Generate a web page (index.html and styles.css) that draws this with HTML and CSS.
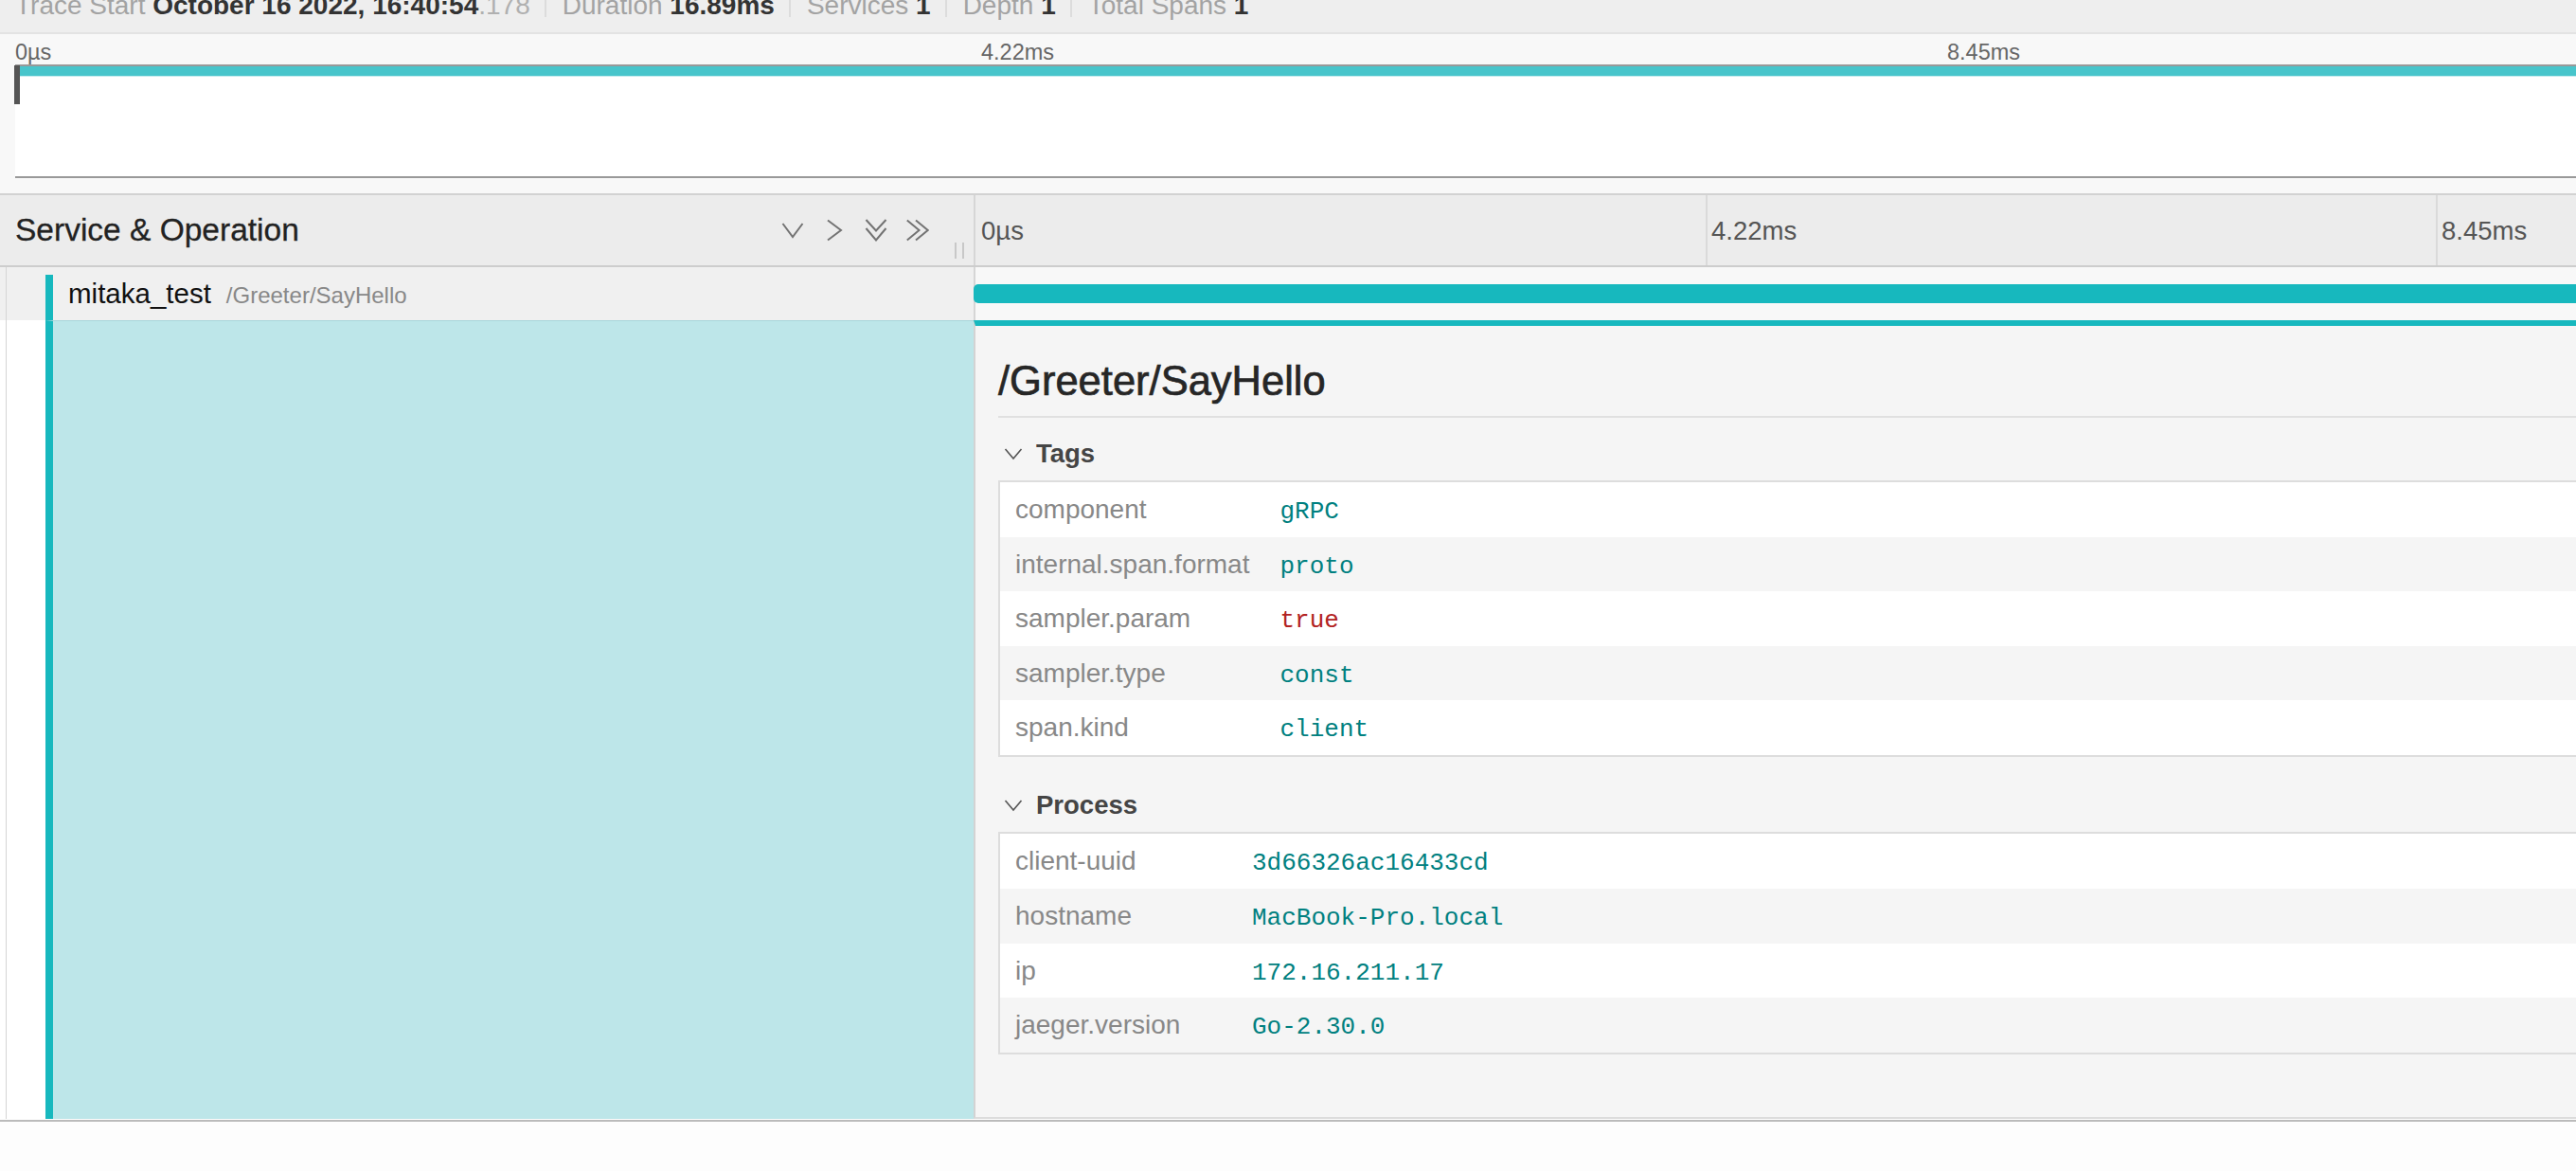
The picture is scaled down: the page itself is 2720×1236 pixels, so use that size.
FILE: index.html
```html
<!DOCTYPE html>
<html lang="en">
<head>
<meta charset="utf-8">
<title>Trace</title>
<link rel="stylesheet" href="styles.css">
</head>
<body>
<div class="page">
  <div class="overview">
    <div class="ov-item"><span class="ov-label">Trace Start</span> <strong class="ov-val">October 16 2022, 16:40:54</strong><span class="ov-dim">.178</span></div>
    <i class="ov-sep"></i>
    <div class="ov-item"><span class="ov-label">Duration</span> <strong class="ov-val">16.89ms</strong></div>
    <i class="ov-sep"></i>
    <div class="ov-item"><span class="ov-label">Services</span> <strong class="ov-val">1</strong></div>
    <i class="ov-sep"></i>
    <div class="ov-item"><span class="ov-label">Depth</span> <strong class="ov-val">1</strong></div>
    <i class="ov-sep"></i>
    <div class="ov-item"><span class="ov-label">Total Spans</span> <strong class="ov-val">1</strong></div>
  </div>

  <section class="minimap">
    <div class="mm-labels"><span>0µs</span><span>4.22ms</span><span>8.45ms</span><span>12.67ms</span></div>
    <div class="mm-box">
      <div class="mm-bar"></div>
      <div class="mm-tick edge"></div>
      <div class="mm-tick"></div>
      <div class="mm-tick"></div>
      <div class="mm-tick"></div>
      <div class="mm-handle"></div>
    </div>
  </section>

  <div class="trace">
    <div class="tl-header">
      <div class="name-col hdr-name">
        <h3 class="hdr-title">Service &amp; Operation</h3>
        <div class="hdr-icons">
          <svg class="ico" viewBox="0 0 24 24"><polyline points="1.5,5 12,19 22.5,5"/></svg>
          <svg class="ico" viewBox="0 0 24 24"><polyline points="5,1.5 19,12 5,22.5"/></svg>
          <svg class="ico" viewBox="0 0 24 24"><polyline points="1.5,1 12,12.5 22.5,1"/><polyline points="1.5,10 12,22.5 22.5,10"/></svg>
          <svg class="ico" viewBox="0 0 24 24"><polyline points="0.8,1.5 13.5,12 0.8,22.5"/><polyline points="10,1.5 22.7,12 10,22.5"/></svg>
        </div>
        <div class="resizer"><i></i><i></i></div>
      </div>
      <div class="ticks hdr-ticks">
        <div class="tick first"><span>0µs</span></div>
        <div class="tick"><span>4.22ms</span></div>
        <div class="tick"><span>8.45ms</span></div>
        <div class="tick"><span>12.67ms</span></div>
      </div>
    </div>

    <div class="span-row">
      <div class="name-col row-name">
        <div class="indent"></div>
        <div class="span-name"><span class="label"><span class="svc">mitaka_test</span><small class="op">/Greeter/SayHello</small></span></div>
      </div>
      <div class="ticks row-ticks">
        <div class="tick first"></div>
        <div class="tick"></div>
        <div class="tick"></div>
        <div class="tick"></div>
        <div class="span-bar"></div>
      </div>
    </div>

    <div class="detail-row">
      <div class="detail-left">
        <div class="indent"></div>
        <div class="accent"></div>
      </div>
      <div class="detail">
        <h2 class="detail-title">/Greeter/SayHello</h2>
        <div class="divider"></div>

        <div class="acc-header">
          <svg class="acc-ico" viewBox="0 0 24 24"><polyline points="3.5,7 12,17 20.5,7"/></svg>
          <strong>Tags</strong>
        </div>
        <table class="kv">
          <tbody>
            <tr><td class="k">component</td><td class="v str">gRPC</td></tr>
            <tr><td class="k">internal.span.format</td><td class="v str">proto</td></tr>
            <tr><td class="k">sampler.param</td><td class="v bool">true</td></tr>
            <tr><td class="k">sampler.type</td><td class="v str">const</td></tr>
            <tr><td class="k">span.kind</td><td class="v str">client</td></tr>
          </tbody>
        </table>

        <div class="acc-header">
          <svg class="acc-ico" viewBox="0 0 24 24"><polyline points="3.5,7 12,17 20.5,7"/></svg>
          <strong>Process</strong>
        </div>
        <table class="kv last">
          <tbody>
            <tr><td class="k">client-uuid</td><td class="v str">3d66326ac16433cd</td></tr>
            <tr><td class="k">hostname</td><td class="v str">MacBook-Pro.local</td></tr>
            <tr><td class="k">ip</td><td class="v str">172.16.211.17</td></tr>
            <tr><td class="k">jaeger.version</td><td class="v str">Go-2.30.0</td></tr>
          </tbody>
        </table>
      </div>
    </div>
  </div>
</div>
</body>
</html>
```

FILE: styles.css
```css
html, body {
  margin: 0;
  padding: 0;
  overflow: hidden;
}

body {
  background: #fdfdfd;
  font-family: "Liberation Sans", Arial, Helvetica, sans-serif;
  color: #333;
}

.page {
  width: 4114px;
  margin-top: -23px;
}

/* ---------- overview bar ---------- */
.overview {
  display: flex;
  align-items: center;
  height: 57px;
  padding-left: 16px;
  background: #eeeeee;
  border-bottom: 2px solid #e3e3e3;
  font-size: 28px;
  line-height: 32px;
  color: #a3a3a3;
  white-space: nowrap;
}

.ov-val {
  color: #333;
  font-weight: bold;
}

.ov-dim {
  color: #b0b0b0;
}

.ov-sep {
  width: 2px;
  height: 25px;
  margin: 0 17px 0 15px;
  background: #dcdcdc;
}

/* ---------- minimap ---------- */
.minimap {
  background: #f8f8f8;
  padding: 6px 18px 16px 16px;
  border-bottom: 2px solid #d2d2d2;
}

.mm-labels {
  display: grid;
  grid-template-columns: repeat(4, 1020px);
  font-size: 23.5px;
  line-height: 26px;
  color: #666;
}

.mm-box {
  display: grid;
  grid-template-columns: repeat(4, 1020px);
  grid-template-rows: 116px;
  border-top: 2px solid #999;
  border-bottom: 2px solid #999;
  background: #fff;
}

.mm-bar {
  grid-row: 1;
  grid-column: 1 / -1;
  align-self: start;
  height: 10px;
  margin-left: 2px;
  background: #48c5cb;
  border-bottom: 1px solid #c4ebee;
}

.mm-tick {
  grid-row: 1;
  border-left: 2px solid #aaa;
}

.mm-tick.edge {
  border-left-color: #888;
}

.mm-handle {
  grid-row: 1;
  grid-column: 1;
  justify-self: start;
  align-self: start;
  width: 6px;
  height: 41px;
  margin: -1px 0 0 -1px;
  background: #555;
}

/* ---------- trace table ---------- */
.trace {
  padding-bottom: 1px;
  border-bottom: 2px solid #bbb;
  background: #fff;
}

.name-col {
  flex: none;
  width: 1030px;
  box-sizing: border-box;
  border-right: 2px solid #d6d6d6;
}

.ticks {
  flex: 1;
  display: grid;
  grid-template-columns: repeat(4, 1fr);
}

.tick {
  grid-row: 1;
  border-left: 2px solid #dadada;
}

.tick.first {
  border-left-color: transparent;
}

.tl-header {
  display: flex;
  height: 74px;
  background: #ececec;
  border-bottom: 2px solid #cdcdcd;
}

.hdr-name {
  display: flex;
  align-items: center;
  padding: 0 10px 0 16px;
}

.hdr-title {
  margin: 0;
  font-size: 33.5px;
  line-height: 38px;
  font-weight: normal;
  color: #222;
  white-space: nowrap;
  -webkit-text-stroke: 0.3px #222;
}

.hdr-icons {
  display: flex;
  gap: 20px;
  margin-left: auto;
  margin-right: 27px;
}

.ico {
  width: 24px;
  height: 24px;
  fill: none;
  stroke: #737373;
  stroke-width: 2;
}

.resizer {
  align-self: flex-end;
  display: flex;
  gap: 6px;
  height: 17px;
  margin-bottom: 7px;
}

.resizer i {
  width: 2px;
  background: #c8c8c8;
}

.hdr-ticks .tick {
  display: flex;
  align-items: center;
  padding: 2px 0 0 4px;
  font-size: 27.5px;
  color: #555;
  white-space: nowrap;
}

/* span row */
.span-row {
  display: flex;
  height: 56px;
}

.row-name {
  display: flex;
  background: #f0f0f0;
}

.indent {
  flex: none;
  width: 41px;
  margin-left: 6px;
  border-left: 1px solid #d5d5d5;
}

.span-name {
  flex: 1;
  display: flex;
  align-items: center;
  margin-top: 8px;
  padding: 0 0 8px 16px;
  border-left: 8px solid #17b8be;
}

.label {
  white-space: nowrap;
}

.svc {
  font-size: 29.5px;
  color: #111;
}

.op {
  margin-left: 16px;
  font-size: 24px;
  color: #888;
}

.row-ticks {
  background: #f8f8f8;
}

.span-bar {
  grid-row: 1;
  grid-column: 1 / -1;
  align-self: center;
  height: 20px;
  margin-left: -2px;
  border-radius: 5px 0 0 5px;
  background: #17b8be;
}

/* detail row */
.detail-row {
  display: flex;
}

.detail-left {
  flex: none;
  display: flex;
  width: 1028px;
  background: #fff;
}

.accent {
  flex: 1;
  border-left: 8px solid #17b8be;
  border-top: 1px solid #a6d6db;
  background: #bde6e9;
}

.detail {
  flex: 1;
  min-width: 0;
  padding: 24px;
  background: #f5f5f5;
  border-left: 2px solid #d3d3d3;
  border-top: 6px solid #17b8be;
  border-bottom: 2px solid #dcdcdc;
}

.detail-title {
  margin: 9px 0 12px;
  font-size: 43.5px;
  line-height: 50px;
  font-weight: normal;
  color: #262626;
  -webkit-text-stroke: 0.7px #262626;
}

.divider {
  height: 2px;
  margin-bottom: 10px;
  background: #e0e0e0;
}

.acc-header {
  display: flex;
  align-items: center;
  padding: 7px 0;
  font-size: 27.5px;
  line-height: 42px;
  color: #454545;
}

.acc-ico {
  width: 24px;
  height: 24px;
  margin: 0 12px 0 4px;
  fill: none;
  stroke: #555;
  stroke-width: 1.6;
}

.kv {
  width: 100%;
  border: 2px solid #ddd;
  border-collapse: separate;
  border-spacing: 0;
  background: #fff;
  margin-bottom: 23.5px;
}

.kv.last {
  margin-bottom: 42px;
}

.kv td {
  padding: 8px 16px;
  vertical-align: baseline;
}

.kv tr:nth-child(even) td {
  background: #f5f5f5;
}

.k {
  width: 218px;
  font-size: 28px;
  line-height: 41.6px;
  color: #888;
  white-space: pre;
}

.v {
  font-family: "Liberation Mono", "Courier New", monospace;
  font-size: 26px;
  line-height: 36px;
  white-space: pre;
}

.str {
  color: #008080;
}

.bool {
  color: #b22222;
}
```
